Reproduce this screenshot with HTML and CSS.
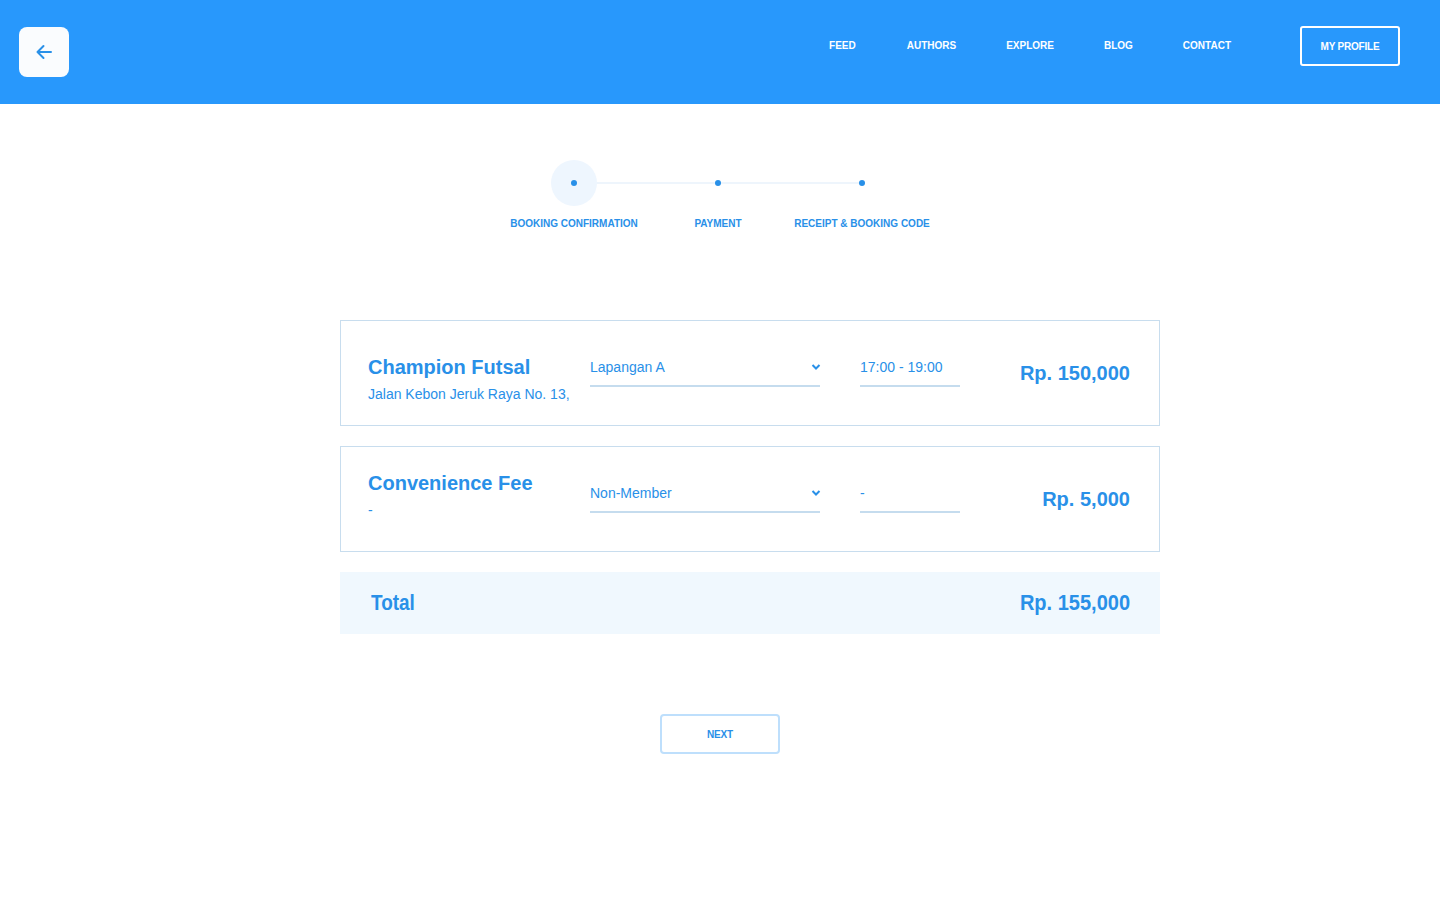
FILE: index.html
```html
<!DOCTYPE html>
<html>
<head>
<meta charset="utf-8">
<link rel="stylesheet" href="styles.css">
</head>
<body>
<header class="topbar">
  <button class="back-btn" aria-label="Back">
    <svg width="20" height="20" viewBox="0 0 20 20"><path d="M17 10H3.5M9.5 4L3.5 10L9.5 16" fill="none" stroke="#2990E8" stroke-width="2" stroke-linecap="round" stroke-linejoin="round"/></svg>
  </button>
  <nav class="nav">
    <a class="nav-link">FEED</a>
    <a class="nav-link">AUTHORS</a>
    <a class="nav-link">EXPLORE</a>
    <a class="nav-link">BLOG</a>
    <a class="nav-link">CONTACT</a>
  </nav>
  <a class="profile-btn">MY PROFILE</a>
</header>

<main class="main">
  <div class="stepper">
    <div class="step-track">
      <div class="track-line"></div>
      <div class="step-node active"><span class="dot"></span></div>
      <div class="step-node"><span class="dot"></span></div>
      <div class="step-node"><span class="dot"></span></div>
    </div>
    <div class="step-labels">
      <span class="step-label">BOOKING CONFIRMATION</span>
      <span class="step-label">PAYMENT</span>
      <span class="step-label">RECEIPT &amp; BOOKING CODE</span>
    </div>
  </div>

  <div class="cards">
    <section class="card">
      <div class="info first">
        <div class="title">Champion Futsal</div>
        <div class="sub">Jalan Kebon Jeruk Raya No. 13,</div>
      </div>
      <div class="field select">
        <span>Lapangan A</span>
        <svg class="chev" width="10" height="8" viewBox="0 0 10 8"><path d="M1.5 2L5 5.5L8.5 2" fill="none" stroke="#2990E8" stroke-width="2"/></svg>
      </div>
      <div class="field time"><span>17:00 - 19:00</span></div>
      <div class="price">Rp. 150,000</div>
    </section>

    <section class="card">
      <div class="info second">
        <div class="title">Convenience Fee</div>
        <div class="sub">-</div>
      </div>
      <div class="field select">
        <span>Non-Member</span>
        <svg class="chev" width="10" height="8" viewBox="0 0 10 8"><path d="M1.5 2L5 5.5L8.5 2" fill="none" stroke="#2990E8" stroke-width="2"/></svg>
      </div>
      <div class="field time"><span>-</span></div>
      <div class="price">Rp. 5,000</div>
    </section>

    <section class="total">
      <span class="total-label">Total</span>
      <span class="total-price">Rp. 155,000</span>
    </section>
  </div>

  <div class="actions">
    <button class="next-btn">NEXT</button>
  </div>
</main>
</body>
</html>
```

FILE: styles.css
```css
* { box-sizing: border-box; }
body {
  margin: 0;
  font-family: "Liberation Sans", Arial, sans-serif;
  background: #fff;
  color: #2990E8;
}
.topbar {
  height: 104px;
  background: #2898FC;
  display: flex;
  align-items: center;
  padding: 0 40px 0 19px;
}
.back-btn {
  width: 50px;
  height: 50px;
  border: none;
  border-radius: 8px;
  background: #FAFCFE;
  display: flex;
  align-items: center;
  justify-content: center;
  padding: 0;
}
.nav {
  margin-left: auto;
  display: flex;
  margin-top: -14px;
}
.nav-link {
  color: #fff;
  font-size: 10px;
  font-weight: 700;
  margin-right: 50px;
}
.nav-link:first-child { margin-right: 51px; }
.nav-link:last-child { margin-right: 69px; }
.profile-btn {
  width: 100px;
  height: 40px;
  border: 2px solid #fff;
  border-radius: 3px;
  color: #fff;
  font-size: 10px;
  font-weight: 700;
  display: flex;
  align-items: center;
  justify-content: center;
  letter-spacing: -0.2px;
  margin-top: -12px;
}
.main {
  padding-top: 56px;
}
.stepper {
  display: flex;
  flex-direction: column;
  align-items: center;
}
.step-track {
  position: relative;
  width: 334px;
  height: 46px;
  display: flex;
  justify-content: space-between;
  align-items: center;
  margin-left: -4px;
}
.track-line {
  position: absolute;
  left: 23px;
  right: 23px;
  top: 22px;
  height: 2px;
  background: #EEF5FC;
}
.step-node {
  position: relative;
  width: 46px;
  height: 46px;
  border-radius: 50%;
  display: flex;
  align-items: center;
  justify-content: center;
}
.step-node.active { background: #EEF6FE; }
.dot {
  width: 6px;
  height: 6px;
  border-radius: 50%;
  background: #2990E8;
}
.step-labels {
  display: flex;
  margin-top: 12px;
  margin-left: -4px;
}
.step-label {
  font-size: 10px;
  font-weight: 700;
  width: 144px;
  white-space: nowrap;
  display: flex;
  justify-content: center;
}
.cards {
  width: 820px;
  margin-left: calc(50% - 380px);
  margin-top: 91px;
}
.card {
  height: 106px;
  border: 1px solid #C8DDEE;
  display: flex;
  align-items: center;
  padding: 0 29px 0 27px;
}
.card + .card { margin-top: 20px; }
.info { width: 222px; align-self: flex-start; }
.info.first { padding-top: 34px; }
.info.second { padding-top: 24px; }
.title {
  font-size: 20px;
  font-weight: 700;
  line-height: 24px;
}
.sub {
  font-size: 14px;
  line-height: 18px;
  margin-top: 6px;
  white-space: nowrap;
}
.field {
  height: 38px;
  border-bottom: 2px solid #C5DCEE;
  font-size: 14px;
  display: flex;
  align-items: center;
  margin-top: -10px;
}
.select {
  width: 230px;
  justify-content: space-between;
  margin-right: 40px;
}
.chev { margin-right: -1px; margin-top: -1px; }
.time { width: 100px; }
.price {
  margin-left: auto;
  font-size: 20px;
  font-weight: 700;
}
.total {
  margin-top: 20px;
  height: 62px;
  background: #F0F8FE;
  display: flex;
  align-items: center;
  justify-content: space-between;
  padding: 0 30px 0 31px;
}
.total-label, .total-price {
  font-size: 22px;
  font-weight: 700;
  display: inline-block;
}
.total-label { transform: scaleX(0.86); transform-origin: left center; }
.total-price { transform: scaleX(0.91); transform-origin: right center; }
.actions {
  display: flex;
  justify-content: center;
  margin-top: 80px;
}
.next-btn {
  width: 120px;
  height: 40px;
  background: #fff;
  border: 2px solid #BEDFFC;
  border-radius: 4px;
  color: #2990E8;
  font-family: "Liberation Sans", Arial, sans-serif;
  font-size: 10px;
  font-weight: 700;
  letter-spacing: -0.2px;
}
```
